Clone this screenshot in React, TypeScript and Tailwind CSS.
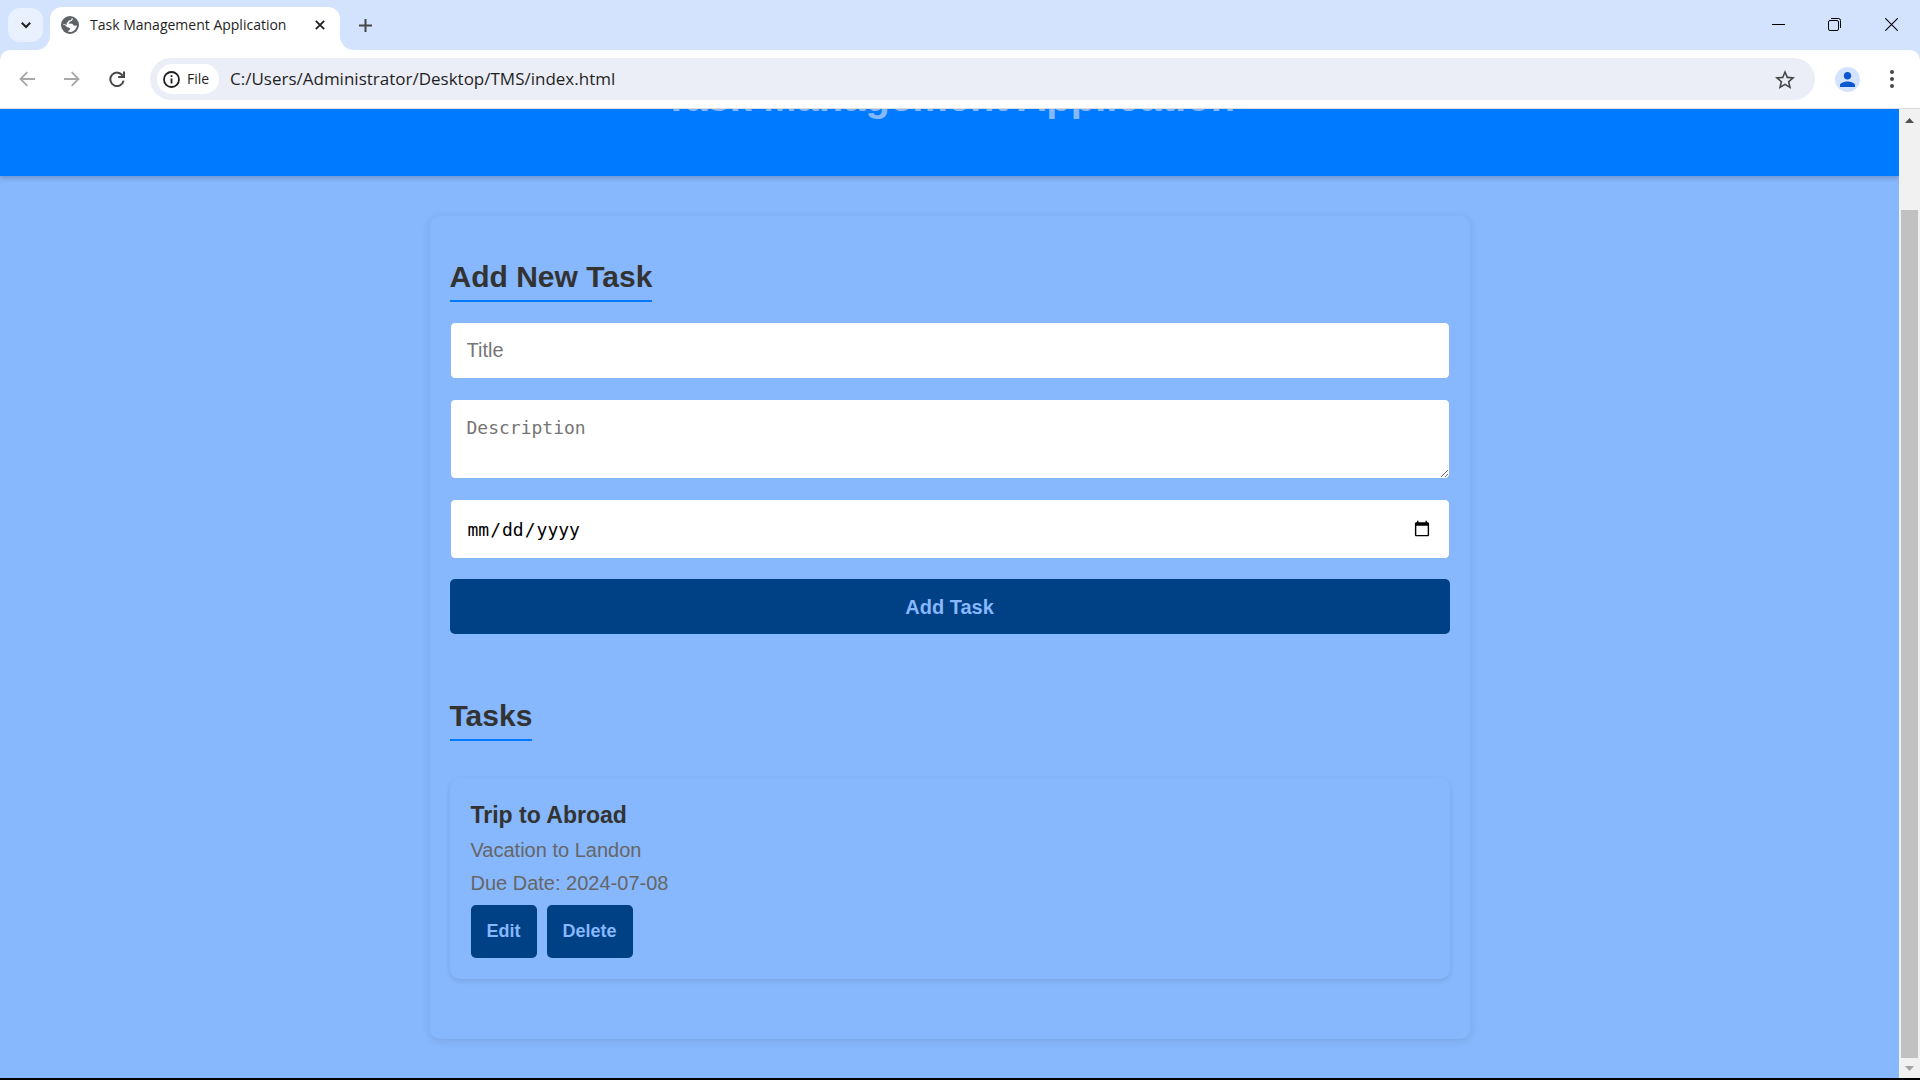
import React from "react";

type Task = { id: number; title: string; description: string; due: string };

const tasks: Task[] = [
  { id: 1, title: "Trip to Abroad", description: "Vacation to Landon", due: "2024-07-08" },
];

function GlobeIcon() {
  return (
    <svg viewBox="0 0 18 18" className="size-[18px]" aria-hidden="true">
      <circle cx="9" cy="9" r="9" fill="#5f6368" />
      <path
        d="M11.4 2.1 C12.2 3.6 11.4 4.9 9.8 5.3 L8.6 5.8 C8.4 6.8 8 7.4 7 7.6 L11 7.8 C12.2 8.2 12.2 9.6 13.6 9.8 L15.9 9.4 C15.6 12.6 13.2 15.4 9.6 15.9 L6.8 15.6 C7.4 14.4 9.2 14.2 9.2 12.8 C9 11.2 6.6 11.6 5.4 10.4 C4.2 9.2 3.2 8.8 2.1 8.6 C2.3 5.6 5 2.6 8 2.1 Z"
        fill="#fff"
      />
      <path
        d="M6.6 1.4 L10.6 1.4 C11.2 3.2 10 4.3 8.6 4.3 C7.2 4.5 7.6 6 6.2 6.4 C5.2 6.8 5.6 8.2 6.4 8.8 L4.4 8.4 L1.2 7.4 C1.6 4.6 4 2.2 6.6 1.4 Z"
        fill="#5f6368"
      />
    </svg>
  );
}

function TabStrip() {
  return (
    <div className="flex h-[50px] shrink-0 items-stretch bg-[#d3e3fd]">
      <div className="flex items-center pl-2">
        <button aria-label="Search tabs" className="flex h-[34px] w-[35px] items-center justify-center rounded-xl bg-[#e9f1fe]">
          <svg viewBox="0 0 10 7" className="h-[7px] w-[10px]" fill="none" stroke="#1f1f1f" strokeWidth="2">
            <path d="M0.8 0.8 L5 5 L9.2 0.8" />
          </svg>
        </button>
      </div>
      <div className="relative mt-[7px] ml-[7px] flex w-[290px] items-center rounded-t-xl bg-white pr-[10px] pb-[7px] pl-[11px]">
        <svg viewBox="0 0 14 14" className="absolute bottom-0 -left-[14px] size-[14px]" aria-hidden="true">
          <path d="M14 0 V14 H0 A14 14 0 0 0 14 0 Z" fill="#fff" />
        </svg>
        <svg viewBox="0 0 14 14" className="absolute -right-[14px] bottom-0 size-[14px]" aria-hidden="true">
          <path d="M0 0 V14 H14 A14 14 0 0 1 0 0 Z" fill="#fff" />
        </svg>
        <GlobeIcon />
        <span className="ml-[11px] flex-1 text-sm whitespace-nowrap text-[#1f1f1f]">Task Management Application</span>
        <button aria-label="Close tab" className="flex size-5 items-center justify-center">
          <svg viewBox="0 0 10 10" className="size-[10px]" stroke="#1f1f1f" strokeWidth="1.8">
            <path d="M0.8 0.8 L9.2 9.2 M9.2 0.8 L0.8 9.2" />
          </svg>
        </button>
      </div>
      <button aria-label="New tab" className="ml-[15px] flex w-5 items-center justify-center">
        <svg viewBox="0 0 13 13" className="size-[13px]" stroke="#474747" strokeWidth="2">
          <path d="M6.5 0 V13 M0 6.5 H13" />
        </svg>
      </button>
      <div className="flex-1" />
      <div className="flex pb-[1px] text-black">
        <button aria-label="Minimize" className="flex w-14 items-center justify-center">
          <svg viewBox="0 0 13 13" className="size-[13px]" stroke="#000" strokeWidth="1">
            <path d="M0 6.5 H13" />
          </svg>
        </button>
        <button aria-label="Restore" className="flex w-14 items-center justify-center">
          <svg viewBox="0 0 13 13" className="size-[13px]" fill="none" stroke="#000" strokeWidth="1">
            <rect x="0.5" y="2.5" width="10" height="10" rx="1.5" />
            <path d="M3 0.5 H10.5 A2 2 0 0 1 12.5 2.5 V10" />
          </svg>
        </button>
        <button aria-label="Close window" className="flex w-[58px] items-center justify-center">
          <svg viewBox="0 0 13 13" className="size-[13px]" stroke="#000" strokeWidth="1.1">
            <path d="M0.3 0.3 L12.7 12.7 M12.7 0.3 L0.3 12.7" />
          </svg>
        </button>
      </div>
    </div>
  );
}

function Toolbar() {
  return (
    <div className="shrink-0 bg-[#d3e3fd]">
      <div className="flex h-[59px] items-center rounded-t-[10px] border-b border-[#dadce0] bg-white pr-[18px] pl-[17px]">
        <button aria-label="Back" className="flex w-5 justify-center">
          <svg viewBox="0 0 16 16" className="size-4" fill="none" stroke="#a8a8a8" strokeWidth="1.8">
            <path d="M16 8 H2 M8.3 1.2 L1.5 8 L8.3 14.8" />
          </svg>
        </button>
        <button aria-label="Forward" className="ml-[25px] flex w-5 justify-center">
          <svg viewBox="0 0 16 16" className="size-4" fill="none" stroke="#a8a8a8" strokeWidth="1.8">
            <path d="M0 8 H14 M7.7 1.2 L14.5 8 L7.7 14.8" />
          </svg>
        </button>
        <button aria-label="Reload" className="ml-[25px] flex w-5 justify-center">
          <svg viewBox="0 0 16 16" className="size-4" fill="none" stroke="#474747" strokeWidth="2">
            <path d="M13.6 4.6 A6.7 6.7 0 1 0 14.6 9.6" />
            <path d="M15 0.4 V6 H9.2" />
          </svg>
        </button>
        <div className="ml-[23px] flex h-[42px] flex-1 items-center rounded-full bg-[#ebeef7] pr-[20px] pl-[7px]">
          <button className="flex h-[30px] w-[62px] items-center rounded-full bg-white pl-[6px] text-sm text-[#1f1f1f]">
            <svg viewBox="0 0 17 17" className="mr-[7px] size-[17px]" fill="none" stroke="#1f1f1f" strokeWidth="1.8">
              <circle cx="8.5" cy="8.5" r="7.5" />
              <path d="M8.5 7.4 V12.6 M8.5 4.2 V6" />
            </svg>
            File
          </button>
          <input
            aria-label="Address"
            readOnly
            value="C:/Users/Administrator/Desktop/TMS/index.html"
            className="ml-[11px] min-w-0 flex-1 bg-transparent text-[17px] text-[#1f1f1f] outline-none"
          />
          <button aria-label="Bookmark this tab">
            <svg viewBox="2 2 20 19" className="h-[19px] w-5" fill="#474747">
              <path d="M22 9.24l-7.19-.62L12 2 9.19 8.63 2 9.24l5.46 4.73L5.82 21 12 17.27 18.18 21l-1.63-7.03L22 9.24zM12 15.4l-3.76 2.27 1-4.28-3.32-2.88 4.38-.38L12 6.1l1.71 4.04 4.38.38-3.32 2.88 1 4.28L12 15.4z" />
            </svg>
          </button>
        </div>
        <button aria-label="Profile" className="ml-5 flex size-[25px] items-center justify-center rounded-full bg-[#d3e3fd]">
          <svg viewBox="4 4 16 16" className="size-[15px]" fill="#0b57d0">
            <path d="M12 12c2.21 0 4-1.79 4-4s-1.79-4-4-4-4 1.790-4 4 1.790 4 4 4zm0 2c-2.670 0-8 1.340-8 4v2h16v-2c0-2.660-5.330-4-8-4z" />
          </svg>
        </button>
        <button aria-label="Menu" className="ml-[22px] flex w-5 justify-center">
          <svg viewBox="0 0 4 18" className="h-[18px] w-1" fill="#474747">
            <circle cx="2" cy="2" r="2" />
            <circle cx="2" cy="9" r="2" />
            <circle cx="2" cy="16" r="2" />
          </svg>
        </button>
      </div>
    </div>
  );
}

function Scrollbar() {
  return (
    <div className="flex w-[21px] shrink-0 flex-col items-stretch bg-[#f1f1f1] px-[2px]">
      <button aria-label="Scroll up" className="flex h-[22px] shrink-0 items-center justify-center">
        <svg viewBox="0 0 9 5" className="h-[5px] w-[9px]" fill="#505050">
          <path d="M0 5 L4.5 0 L9 5 Z" />
        </svg>
      </button>
      <div className="grow-[79]" />
      <div className="grow-[848] bg-[#c1c1c1]" />
      <button aria-label="Scroll down" className="flex h-5 shrink-0 items-center justify-center">
        <svg viewBox="0 0 9 5" className="h-[5px] w-[9px]" fill="#a3a3a3">
          <path d="M0 0 L4.5 5 L9 0 Z" />
        </svg>
      </button>
    </div>
  );
}

function SectionHeading({ children }: { children: React.ReactNode }) {
  return (
    <h2 className="w-fit border-b-2 border-[#007bff] pb-[5px] text-[30px] leading-9 font-bold text-[#333]">{children}</h2>
  );
}

function TaskForm() {
  return (
    <form className="mt-5 flex flex-col gap-5" onSubmit={(e) => e.preventDefault()}>
      <input
        aria-label="Title"
        type="text"
        placeholder="Title"
        className="h-[57px] rounded-[5px] border border-[#87b7fc] bg-white px-4 text-xl placeholder:text-[#757575]"
      />
      <textarea
        aria-label="Description"
        placeholder="Description"
        className="h-20 resize rounded-[5px] border border-[#87b7fc] bg-white p-4 font-['DejaVu_Sans_Mono',monospace] text-[18px] leading-6 placeholder:text-[#757575]"
      />
      <input
        aria-label="Due date"
        type="date"
        className="h-[60px] rounded-[5px] border border-[#87b7fc] bg-white px-4 font-['DejaVu_Sans_Mono',monospace] text-[18px] text-black"
      />
      <button type="submit" className="h-[55px] rounded-[5px] bg-[#004085] text-xl font-bold text-[#87b7fc]">
        Add Task
      </button>
    </form>
  );
}

function TaskCard({ task }: { task: Task }) {
  return (
    <li className="rounded-[10px] p-[21px] shadow-[0_2px_5px_rgba(0,0,0,0.1)]">
      <h3 className="text-[23px] leading-8 font-bold text-[#333]">{task.title}</h3>
      <p className="mt-[5px] text-xl leading-7 text-[#666]">{task.description}</p>
      <p className="mt-[5px] text-xl leading-7 text-[#666]">Due Date: {task.due}</p>
      <div className="mt-2 flex gap-[10px]">
        <button className="h-[53px] rounded-[5px] bg-[#004085] px-4 text-[18px] font-bold text-[#87b7fc]">Edit</button>
        <button className="h-[53px] rounded-[5px] bg-[#004085] px-4 text-[18px] font-bold text-[#87b7fc]">Delete</button>
      </div>
    </li>
  );
}

export default function App() {
  return (
    <div className="flex h-screen flex-col border-b-2 border-black font-['Open_Sans','Noto_Sans',sans-serif]">
      <TabStrip />
      <Toolbar />
      <div className="flex min-h-0 flex-1">
        <div className="min-w-0 flex-1 overflow-hidden bg-[#87b7fc] font-['Liberation_Sans',Arial,sans-serif]">
          <header className="-mt-9 bg-[#007bff] pb-[55px] text-center shadow-[0_2px_5px_rgba(0,0,0,0.2)]">
            <h1 className="text-[40px] leading-[48px] font-bold text-[#87b7fc]">Task Management Application</h1>
          </header>
          <main className="mx-auto mt-10 max-w-[1040px] rounded-[10px] px-5 pt-[43px] pb-[60px] shadow-[0_2px_10px_rgba(0,0,0,0.1)]">
            <section>
              <SectionHeading>Add New Task</SectionHeading>
              <TaskForm />
            </section>
            <section className="mt-16">
              <SectionHeading>Tasks</SectionHeading>
              <ul className="mt-[37px]">
                {tasks.map((task) => (
                  <TaskCard key={task.id} task={task} />
                ))}
              </ul>
            </section>
          </main>
        </div>
        <Scrollbar />
      </div>
    </div>
  );
}
